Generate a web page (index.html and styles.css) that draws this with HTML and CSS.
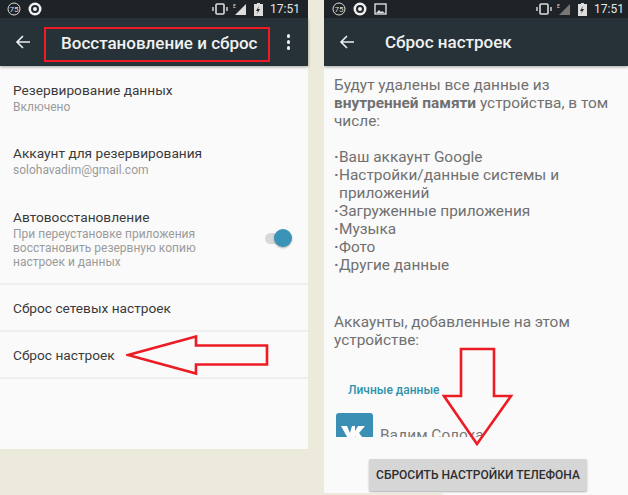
FILE: index.html
```html
<!DOCTYPE html>
<html lang="ru">
<head>
    <meta charset="UTF-8">
    <title>Сброс настроек</title>
    <link rel="stylesheet" href="styles.css">
</head>
<body>
    <div class="shots">
        <!-- Левый экран -->
        <div class="phone phone-left">
            <div class="status-bar">
                <svg class="st-icon" viewBox="0 0 14 14"><circle cx="7" cy="7" r="6" fill="none" stroke="#ddd" stroke-width="1"/><text x="7" y="10" text-anchor="middle" class="st-num">75</text></svg>
                <svg class="st-icon st-gap" viewBox="0 0 14 14"><circle cx="7" cy="7" r="6.5" fill="#f2f2f2"/><circle cx="7" cy="7" r="3" fill="none" stroke="#22282c" stroke-width="2"/></svg>
                <div class="spacer"></div>
                <svg class="st-vibrate" viewBox="0 0 16 12"><rect x="4" y="1" width="8" height="10" rx="1" fill="none" stroke="#ddd" stroke-width="1.6"/><path d="M1 4v4M15 4v4" stroke="#ddd" stroke-width="1.4"/></svg>
                <svg class="st-signal" viewBox="0 0 14 12"><path d="M13 1v11H2z" fill="#ddd"/><text x="0" y="5" class="st-e">E</text></svg>
                <svg class="st-battery" viewBox="0 0 9 13"><path d="M3 0h3v1h3v12H0V1h3z" fill="#ddd"/><path d="M5 3L2 8h2l-1 3 3-5H4z" fill="#22282c"/></svg>
                <span class="st-time">17:51</span>
            </div>
            <div class="toolbar">
                <svg class="back" viewBox="0 0 16 16"><path d="M15 8H2M8 2L2 8l6 6" fill="none" stroke="#eef0f0" stroke-width="1.6"/></svg>
                <h1 class="title title-boxed">Восстановление и сброс</h1>
                <div class="more"><i></i><i></i><i></i></div>
            </div>
            <div class="row row-first">
                <div class="row-title">Резервирование данных</div>
                <div class="row-sub">Включено</div>
            </div>
            <div class="row row-account">
                <div class="row-title">Аккаунт для резервирования</div>
                <div class="row-sub">solohavadim@gmail.com</div>
            </div>
            <div class="row row-auto">
                <div class="row-text">
                    <div class="row-title">Автовосстановление</div>
                    <div class="row-sub">При переустановке приложения<br>восстановить резервную копию<br>настроек и данных</div>
                </div>
                <div class="switch"><div class="knob"></div></div>
            </div>
            <div class="row row-plain">
                <div class="row-title">Сброс сетевых настроек</div>
            </div>
            <div class="row row-plain">
                <div class="row-title">Сброс настроек</div>
                <svg class="arrow-left" viewBox="0 0 143 41"><path d="M2 20L70 1.5v9h71v19H70v9z" fill="none" stroke="#ed1c24" stroke-width="2.6"/></svg>
            </div>
        </div>

        <!-- Правый экран -->
        <div class="phone phone-right">
            <div class="status-bar">
                <svg class="st-icon" viewBox="0 0 14 14"><circle cx="7" cy="7" r="6" fill="none" stroke="#ddd" stroke-width="1"/><text x="7" y="10" text-anchor="middle" class="st-num">75</text></svg>
                <svg class="st-icon st-gap" viewBox="0 0 14 14"><circle cx="7" cy="7" r="6.5" fill="#f2f2f2"/><circle cx="7" cy="7" r="3" fill="none" stroke="#22282c" stroke-width="2"/></svg>
                <svg class="st-pic" viewBox="0 0 13 12"><rect x="1" y="1" width="11" height="10" fill="none" stroke="#ddd" stroke-width="1.4"/><path d="M2 10l3-3 2 2 1-1 3 2z" fill="#ddd"/></svg>
                <div class="spacer"></div>
                <svg class="st-vibrate" viewBox="0 0 16 12"><rect x="4" y="1" width="8" height="10" rx="1" fill="none" stroke="#ddd" stroke-width="1.6"/><path d="M1 4v4M15 4v4" stroke="#ddd" stroke-width="1.4"/></svg>
                <svg class="st-signal" viewBox="0 0 14 12"><path d="M13 1v11H2z" fill="#777"/><text x="0" y="5" class="st-e">E</text></svg>
                <svg class="st-battery" viewBox="0 0 9 13"><path d="M3 0h3v1h3v12H0V1h3z" fill="#ddd"/><path d="M5 3L2 8h2l-1 3 3-5H4z" fill="#22282c"/></svg>
                <span class="st-time">17:51</span>
            </div>
            <div class="toolbar">
                <svg class="back" viewBox="0 0 16 16"><path d="M15 8H2M8 2L2 8l6 6" fill="none" stroke="#eef0f0" stroke-width="1.6"/></svg>
                <h1 class="title">Сброс настроек</h1>
            </div>
            <div class="content">
                <p class="para">Будут удалены все данные из<br><b>внутренней памяти</b> устройства, в том<br>числе:</p>
                <ul class="wipe-list">
                    <li>Ваш аккаунт Google</li>
                    <li>Настройки/данные системы и<br>приложений</li>
                    <li>Загруженные приложения</li>
                    <li>Музыка</li>
                    <li>Фото</li>
                    <li>Другие данные</li>
                </ul>
                <p class="para para-accounts">Аккаунты, добавленные на этом<br>устройстве:</p>
                <div class="section-label">Личные данные</div>
                <div class="account">
                    <div class="vk"><svg class="vk-logo" viewBox="0 0 27 20"><path d="M0 0h6l3 7 2-7h3v5l3-5h7l-6 7 7 9h-7l-4-6v6H9z" fill="#fff"/></svg></div>
                    <span class="account-name">Вадим Солоха</span>
                </div>
            </div>
            <div class="footer">
                <button class="reset-btn">СБРОСИТЬ НАСТРОЙКИ ТЕЛЕФОНА</button>
            </div>
            <svg class="arrow-down" viewBox="0 0 72 100"><path d="M19 2h33v47h17L35 97 2 49h17z" fill="none" stroke="#ed1c24" stroke-width="2.6"/></svg>
        </div>
    </div>
</body>
</html>
```

FILE: styles.css
```css
* {
    box-sizing: border-box;
    margin: 0;
    padding: 0;
}

body {
    background: #fff;
    font-family: 'Roboto', 'Liberation Sans', sans-serif;
    overflow: hidden;
}

.shots {
    display: flex;
    width: 628px;
    height: 495px;
}

.phone {
    position: relative;
    background: #fafafa;
    overflow: hidden;
}

.phone-left {
    width: 308px;
    height: 449px;
    overflow: visible;
    box-shadow: 0 46px 0 #eceadb, 16px 46px 0 #eceadb, 16px 0 0 #eceadb;
}

.phone-right {
    width: 304px;
    height: 495px;
    margin-left: 16px;
    display: flex;
    flex-direction: column;
}

/* Статус-бар */
.status-bar {
    display: flex;
    align-items: center;
    height: 18px;
    padding: 0 4px 0 7px;
    background: #1e2327;
    flex: none;
}

.phone-left .status-bar {
    padding-right: 8px;
}

.phone-right .status-bar {
    padding-left: 8px;
}

.spacer {
    flex: 1;
}

.st-icon {
    width: 14px;
    height: 14px;
}

.st-gap {
    margin-left: 7px;
}

.st-pic {
    width: 13px;
    height: 12px;
    margin-left: 7px;
}

.st-num {
    font-size: 8px;
    fill: #ddd;
}

.st-e {
    font-size: 5px;
    fill: #ddd;
}

.st-vibrate {
    width: 16px;
    height: 12px;
}

.st-signal {
    width: 14px;
    height: 12px;
    margin-left: 5px;
}

.st-battery {
    width: 9px;
    height: 13px;
    margin-left: 7px;
}

.st-time {
    margin-left: 7px;
    color: #e4e6e6;
    font-size: 12px;
}

/* Тулбар */
.toolbar {
    display: flex;
    align-items: center;
    height: 48px;
    padding-left: 15px;
    background: #263238;
    box-shadow: 0 1px 3px rgba(0, 0, 0, .35);
    position: relative;
    flex: none;
}

.back {
    width: 16px;
    height: 16px;
    flex: none;
}

.title {
    margin-left: 30px;
    color: #f0f2f2;
    font-size: 17px;
    font-weight: 500;
    white-space: nowrap;
}

.title-boxed {
    margin: 4px 0 0 13px;
    padding: 0 10px 0 15px;
    height: 35px;
    line-height: 29px;
    border: 2px solid #ed1c24;
}

.more {
    display: flex;
    flex-direction: column;
    gap: 2.5px;
    margin-left: 17px;
}

.more i {
    display: block;
    width: 3.5px;
    height: 3.5px;
    border-radius: 50%;
    background: #eef0f0;
}

/* Строки настроек */
.row {
    position: relative;
    padding: 0 13px;
    border-bottom: 1px solid #eeeeee;
}

.row-first {
    height: 63px;
    padding-top: 15px;
    border-bottom: 0;
}

.row-account {
    height: 64px;
    padding-top: 15px;
    border-bottom: 0;
}

.row-auto {
    display: flex;
    justify-content: space-between;
    height: 92px;
    padding-top: 15px;
    padding-right: 16px;
    border-bottom-width: 2px;
}

.row-plain {
    display: flex;
    align-items: center;
    height: 47px;
    border-bottom-width: 2px;
}

.row-title {
    color: #3a3a3a;
    font-size: 13.7px;
    line-height: 18px;
}

.row-sub {
    color: #9a9a9a;
    font-size: 12px;
    line-height: 14px;
    margin-top: 1px;
}

.switch {
    position: relative;
    width: 26px;
    height: 11px;
    margin-top: 25px;
    margin-right: 1px;
    border-radius: 6px;
    background: #d8d8d8;
}

.knob {
    position: absolute;
    right: -1px;
    top: -4px;
    width: 18px;
    height: 18px;
    border-radius: 50%;
    background: #3a94b8;
    box-shadow: 0 1px 2px rgba(0, 0, 0, .3);
}

.arrow-left {
    position: absolute;
    left: 126px;
    top: 3px;
    width: 143px;
    height: 41px;
}

/* Правый экран */
.content {
    flex: 1;
    padding: 10px 10px 0;
    overflow: hidden;
}

.para,
.wipe-list {
    color: #707070;
    font-size: 15.4px;
    line-height: 18px;
    list-style: none;
}

.wipe-list {
    margin-top: 18px;
    padding-left: 5px;
}

.wipe-list li {
    text-indent: -5px;
}

.wipe-list li::before {
    content: "·";
    display: inline-block;
    width: 5px;
    text-indent: 0;
    font-weight: 700;
}

.para-accounts {
    margin-top: 39px;
}

.section-label {
    margin: 34px 0 0 14px;
    color: #2f93ad;
    font-size: 12px;
    font-weight: 500;
}

.account {
    display: flex;
    align-items: flex-start;
    margin-top: 16px;
    margin-left: 2px;
    height: 24px;
    overflow: hidden;
}

.vk {
    display: flex;
    justify-content: center;
    width: 37px;
    height: 39px;
    border-radius: 3px;
    background: #3b8fb5;
    padding-top: 13px;
    flex: none;
}

.vk-logo {
    width: 27px;
    height: 20px;
}

.account-name {
    margin: 13px 0 0 7px;
    color: #777;
    font-size: 15.4px;
}

.footer {
    display: flex;
    justify-content: flex-end;
    flex: none;
    height: 45px;
    padding: 9px 41px 0 0;
    background: #fafafa;
}

.footer::after {
    content: "";
    position: absolute;
    left: 0;
    bottom: 0;
    width: 119px;
    height: 2px;
    background: #eceadb;
}

.reset-btn {
    width: 218px;
    height: 32px;
    border: none;
    border-radius: 2px;
    background: #d6d6d6;
    box-shadow: 0 1px 2px rgba(0, 0, 0, .3);
    color: #2e2e2e;
    font-family: inherit;
    font-size: 12px;
    font-weight: 500;
}

.arrow-down {
    position: absolute;
    left: 118px;
    top: 347px;
    width: 72px;
    height: 100px;
}
```
